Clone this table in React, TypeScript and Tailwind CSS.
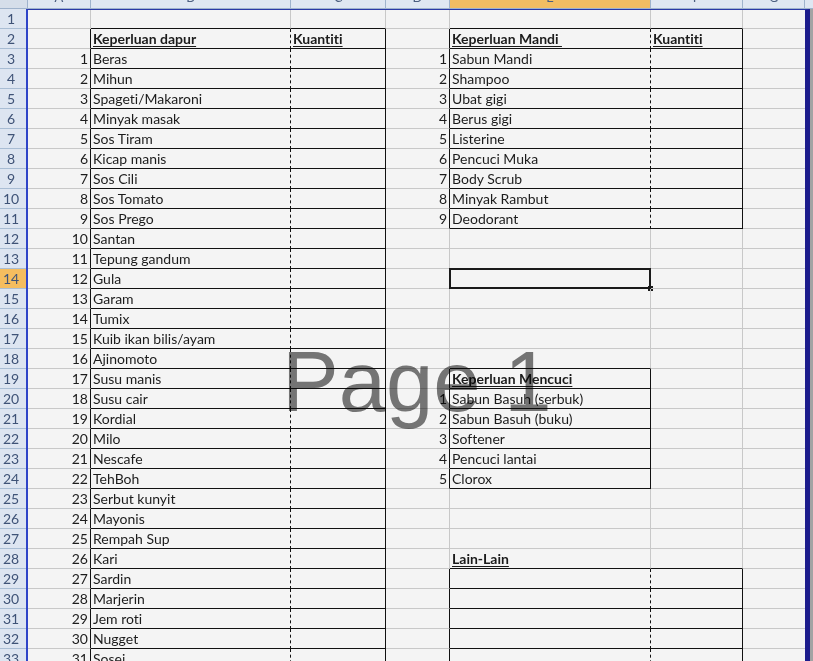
const COLS = ['A', 'B', 'C', 'D', 'E', 'F', 'G'];
const WIDTHS = ['w-[63px]', 'w-[200px]', 'w-[95px]', 'w-[64px]', 'w-[201px]', 'w-[92px]', 'w-[62px]'];
const ROWS = Array.from({ length: 33 }, (_, i) => i + 1);

const dapur = [
  'Beras', 'Mihun', 'Spageti/Makaroni', 'Minyak masak', 'Sos Tiram', 'Kicap manis', 'Sos Cili',
  'Sos Tomato', 'Sos Prego', 'Santan', 'Tepung gandum', 'Gula', 'Garam', 'Tumix',
  'Kuib ikan bilis/ayam', 'Ajinomoto', 'Susu manis', 'Susu cair', 'Kordial', 'Milo', 'Nescafe',
  'TehBoh', 'Serbut kunyit', 'Mayonis', 'Rempah Sup', 'Kari', 'Sardin', 'Marjerin', 'Jem roti',
  'Nugget', 'Sosej',
];
const mandi = ['Sabun Mandi', 'Shampoo', 'Ubat gigi', 'Berus gigi', 'Listerine', 'Pencuci Muka', 'Body Scrub', 'Minyak Rambut', 'Deodorant'];
const mencuci = ['Sabun Basuh (serbuk)', 'Sabun Basuh (buku)', 'Softener', 'Pencuci lantai', 'Clorox'];

// bordered blocks: [rowFrom, rowTo, colFrom, colTo]
const BLOCKS = [
  [2, 34, 1, 2],
  [2, 11, 4, 5],
  [19, 24, 4, 4],
  [29, 34, 4, 5],
];

const inBlock = (r: number, c: number) =>
  BLOCKS.some(([r1, r2, c1, c2]) => r >= r1 && r <= r2 && c >= c1 && c <= c2);

function content(r: number, c: number) {
  const head = 'font-bold underline underline-offset-2';
  if (c === 0 && r >= 3) return { text: String(r - 2), right: true };
  if (c === 1 && r === 2) return { text: 'Keperluan dapur', cls: head };
  if (c === 1 && r >= 3) return { text: dapur[r - 3] };
  if ((c === 2 || c === 5) && r === 2) return { text: 'Kuantiti', cls: head };
  if (c === 3 && r >= 3 && r <= 11) return { text: String(r - 2), right: true };
  if (c === 3 && r >= 20 && r <= 24) return { text: String(r - 19), right: true };
  if (c === 4 && r === 2) return { text: 'Keperluan Mandi\u00a0', cls: head };
  if (c === 4 && r >= 3 && r <= 11) return { text: mandi[r - 3] };
  if (c === 4 && r === 19) return { text: 'Keperluan Mencuci', cls: head };
  if (c === 4 && r >= 20 && r <= 24) return { text: mencuci[r - 20] };
  if (c === 4 && r === 28) return { text: 'Lain-Lain', cls: head };
  return null;
}

function Cell({ r, c }: { r: number; c: number }) {
  const me = inBlock(r, c);
  const rightBlack = me || inBlock(r, c + 1);
  const bottomBlack = me || inBlock(r + 1, c);
  const dashed = me && inBlock(r, c + 1);
  const data = content(r, c);
  const last = c === 6;

  return (
    <div
      className={[
        'relative shrink-0 h-full flex items-center border-b overflow-visible whitespace-nowrap',
        WIDTHS[c],
        last ? '' : 'border-r',
        rightBlack ? 'border-r-[#111]' : 'border-r-[#c8c8c8]',
        bottomBlack ? 'border-b-[#111]' : 'border-b-[#c8c8c8]',
        dashed ? '[border-right-style:dashed]' : '',
        data?.right ? 'justify-end pr-[2px]' : 'pl-[2px]',
      ].join(' ')}
    >
      {data && <span className={`leading-[19px] ${data.cls ?? ''}`}>{data.text}</span>}
      {r === 14 && c === 4 && (
        <>
          <div className="absolute -left-px -top-px -right-px -bottom-px border-2 border-[#1a1a1a]" />
          <div className="absolute -right-[3px] -bottom-[3px] w-[5px] h-[5px] bg-[#1a1a1a]" />
        </>
      )}
    </div>
  );
}

export default function App() {
  return (
    <div className="relative w-[813px] h-[661px] overflow-hidden bg-[#f4f4f4] text-[14px] text-[#1c1c1c] font-['Lato',sans-serif] [font-variant-ligatures:none]">
      {/* column headers */}
      <div className="flex h-[9px] bg-[#dfe7f2] border-b border-[#9fb3cc] overflow-hidden">
        <div className="w-[28px] shrink-0 border-r border-[#9fb3cc] bg-[#d5deea]" />
        {COLS.map((col, i) => (
          <div
            key={col}
            className={`${WIDTHS[i]} shrink-0 border-r border-[#9fb3cc] flex justify-center items-start text-[13px] text-[#4c5f80] ${
              col === 'E' ? 'bg-[#f2bd63]' : ''
            }`}
          >
            <span className="leading-none -mt-[9px]">{col}</span>
          </div>
        ))}
        <div className="flex-1 bg-[#dfe7f2]" />
      </div>

      <div className="flex">
        {/* row headers */}
        <div className="w-[26px] shrink-0 bg-[#dde5f1]">
          {ROWS.map((r) => (
            <div
              key={r}
              className={`h-[20px] border-b border-[#a9bdd4] flex items-center justify-center pr-[4px] text-[14px] text-[#3f5377] leading-none ${
                r === 14 ? 'bg-[#f5bd5f]' : ''
              }`}
            >
              {r}
            </div>
          ))}
        </div>

        {/* print area */}
        <div className="shrink-0 border-l-2 border-l-[#2f45c8] border-t border-t-[#2a3aa8] border-r-[5px] border-r-[#1c1c8c]">
          {ROWS.map((r) => (
            <div key={r} className={`flex ${r === 1 ? 'h-[19px]' : 'h-[20px]'}`}>
              {COLS.map((_, c) => (
                <Cell key={c} r={r} c={c} />
              ))}
            </div>
          ))}
        </div>

        <div className="flex-1 bg-[#a3a3a3]" />
      </div>

      {/* page break preview watermark */}
      <div className="absolute left-[282px] top-[339px] text-[85px] leading-none text-[#6a6a6a] opacity-90 font-['Liberation_Sans',sans-serif] pointer-events-none mix-blend-multiply">
        Page 1
      </div>
    </div>
  );
}
